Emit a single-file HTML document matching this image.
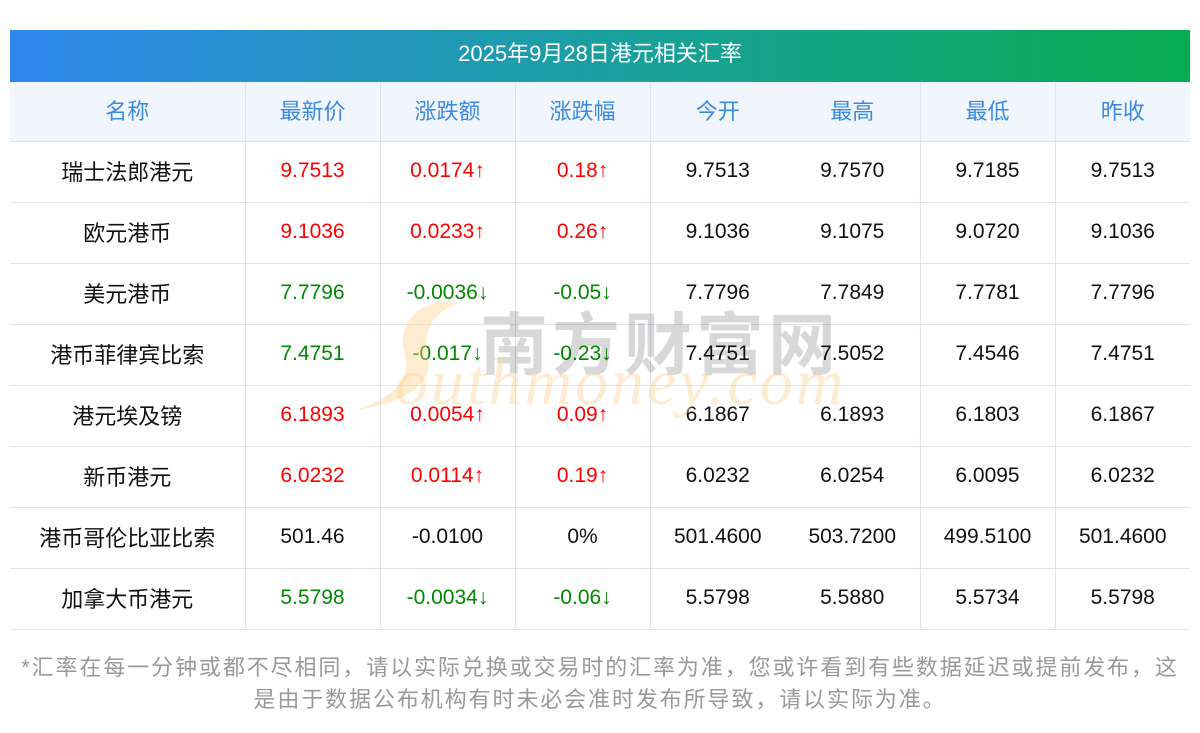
<!DOCTYPE html>
<html><head><meta charset="utf-8"><style>
body{margin:0;width:1200px;height:733px;background:#fff;font-family:"Liberation Sans","Noto Sans CJK SC",sans-serif;position:relative;overflow:hidden}
.title{position:absolute;left:10px;top:30px;width:1180px;height:52px;background:linear-gradient(90deg,#3088ee,#1a9fa0 50%,#08ac50);color:#fff;font-size:22px;text-align:center;line-height:48px}
table{position:absolute;left:10px;top:82px;width:1180px;border-collapse:collapse;table-layout:fixed}
td{height:57px;border-bottom:1px solid #dfe3ec;text-align:center;font-size:21px;color:#111;padding:0 0 3px;border-left:1px solid #dfe3ec}
td:first-child{border-left:none;font-size:22px}
tr.h td{background:#f1f6fe;color:#3a8ae0;font-size:22px;padding-bottom:4px;height:55px}
td.nl{border-left:none}
.r{color:#f00}.g{color:#080}
.foot{position:absolute;left:0;top:652px;width:1200px;text-align:center;color:#999;font-size:22px;line-height:32px;letter-spacing:1.9px}
.wm1{position:absolute;left:480px;top:290px;font-size:68px;font-weight:bold;color:#000;opacity:.15;letter-spacing:4px;z-index:2}
.wm2{position:absolute;left:395px;top:345px;font-size:66px;font-style:italic;font-family:"Liberation Serif",serif;color:#fbd79a;opacity:.45;letter-spacing:3px;z-index:2}
svg{position:absolute;left:350px;top:295px;z-index:2;opacity:.4}
</style></head><body>
<div class="title">2025年9月28日港元相关汇率</div>
<table>
<colgroup><col style="width:235px"><col style="width:135px"><col style="width:135px"><col style="width:135px"><col style="width:135px"><col style="width:135px"><col style="width:135px"><col style="width:135px"></colgroup>
<tr class="h"><td>名称</td><td>最新价</td><td>涨跌额</td><td>涨跌幅</td><td>今开</td><td class="nl">最高</td><td>最低</td><td>昨收</td></tr>
<tr><td>瑞士法郎港元</td><td class="r">9.7513</td><td class="r">0.0174↑</td><td class="r">0.18↑</td><td>9.7513</td><td class="nl">9.7570</td><td>9.7185</td><td>9.7513</td></tr>
<tr><td>欧元港币</td><td class="r">9.1036</td><td class="r">0.0233↑</td><td class="r">0.26↑</td><td>9.1036</td><td class="nl">9.1075</td><td>9.0720</td><td>9.1036</td></tr>
<tr><td>美元港币</td><td class="g">7.7796</td><td class="g">-0.0036↓</td><td class="g">-0.05↓</td><td>7.7796</td><td class="nl">7.7849</td><td>7.7781</td><td>7.7796</td></tr>
<tr><td>港币菲律宾比索</td><td class="g">7.4751</td><td class="g">-0.017↓</td><td class="g">-0.23↓</td><td>7.4751</td><td class="nl">7.5052</td><td>7.4546</td><td>7.4751</td></tr>
<tr><td>港元埃及镑</td><td class="r">6.1893</td><td class="r">0.0054↑</td><td class="r">0.09↑</td><td>6.1867</td><td class="nl">6.1893</td><td>6.1803</td><td>6.1867</td></tr>
<tr><td>新币港元</td><td class="r">6.0232</td><td class="r">0.0114↑</td><td class="r">0.19↑</td><td>6.0232</td><td class="nl">6.0254</td><td>6.0095</td><td>6.0232</td></tr>
<tr><td>港币哥伦比亚比索</td><td>501.46</td><td>-0.0100</td><td>0%</td><td>501.4600</td><td class="nl">503.7200</td><td>499.5100</td><td>501.4600</td></tr>
<tr><td>加拿大币港元</td><td class="g">5.5798</td><td class="g">-0.0034↓</td><td class="g">-0.06↓</td><td>5.5798</td><td class="nl">5.5880</td><td>5.5734</td><td>5.5798</td></tr>
</table>
<svg width="120" height="120" viewBox="0 0 120 120"><path d="M110 8 C70 0 45 30 55 60 C62 85 40 105 5 115 C50 110 85 90 78 60 C72 35 85 15 110 8 Z" fill="#fbd08a"/></svg>
<div class="wm1">南方财富网</div>
<div class="wm2">outhmoney.com</div>
<div class="foot">*汇率在每一分钟或都不尽相同，请以实际兑换或交易时的汇率为准，您或许看到有些数据延迟或提前发布，这<br>是由于数据公布机构有时未必会准时发布所导致，请以实际为准。</div>
</body></html>
